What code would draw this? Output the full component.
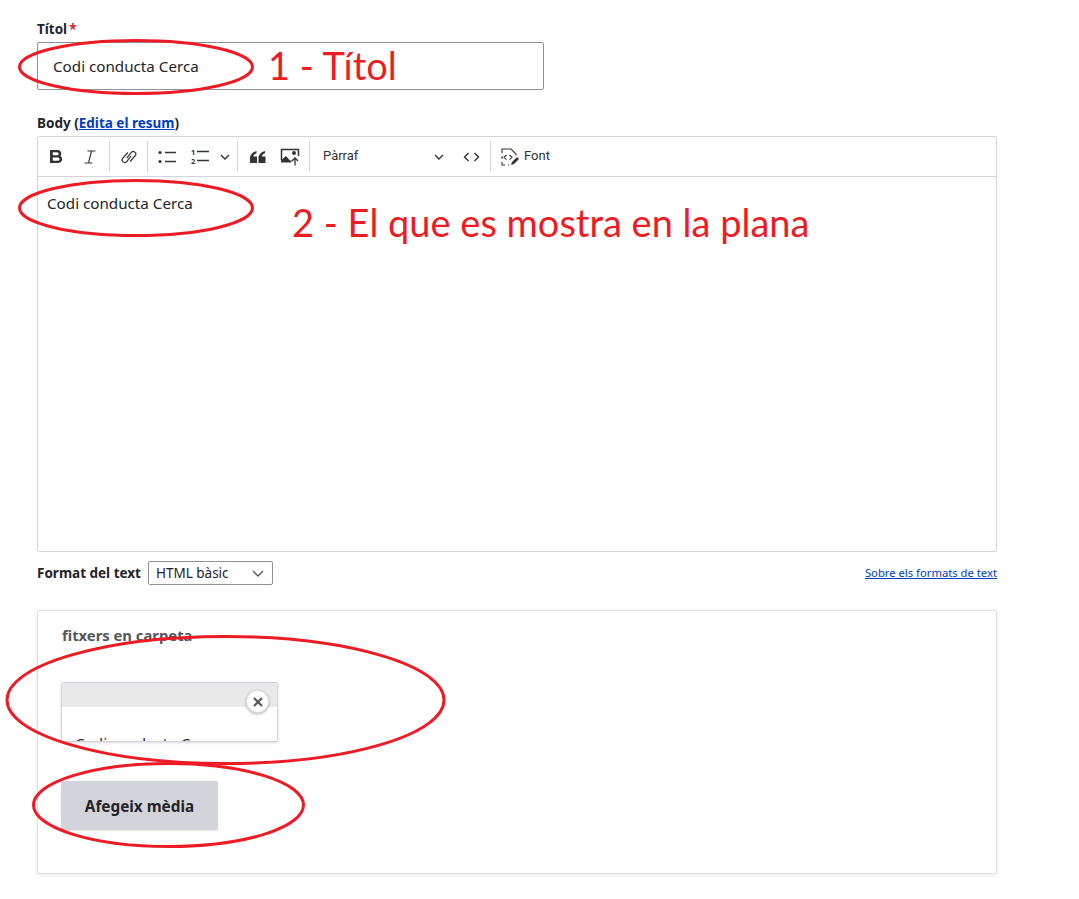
<div class="page">
	<div class="field title-field">
		<div class="label">Títol<span class="req">*</span></div>
		<div class="input">Codi conducta Cerca</div>
	</div>

	<div class="field body-field">
		<div class="label">Body (<a href="#resum" class="strong-link">Edita el resum</a>)</div>
		<div class="editor">
			<div class="toolbar">
				<span class="tool">
					<svg width="14" height="15" viewBox="0 0 14 15"><path d="M0 1h7.500a3.600 3.600 0 0 1 3 5.900A3.900 3.900 0 0 1 8.500 14H0zM2.800 3.300v3h4.400a1.500 1.500 0 0 0 0-3zM2.800 8.500v3.200h5.200a1.600 1.600 0 0 0 0-3.200z" fill="#333" fill-rule="evenodd"/></svg>
				</span>
				<span class="tool">
					<svg width="12" height="14" viewBox="0 0 12 14"><path d="M3.500 1h8M.5 13h8M7.500 1 4.500 13" fill="none" stroke="#333" stroke-width="1.100"/></svg>
				</span>
				<i class="sep first"></i>
				<span class="tool link">
					<svg width="16" height="16" viewBox="0 0 16 16" fill="none" stroke="#333" stroke-width="1.200" stroke-linecap="round"><path d="M6.200 8.600 10.500 3.200a2.600 2.600 0 0 1 4 3.200L9.500 12"/><path d="M9.800 7.400 5.500 12.800a2.600 2.600 0 0 1-4-3.200L6.500 4"/></svg>
				</span>
				<i class="sep"></i>
				<span class="tool bullets">
					<svg width="20" height="14" viewBox="0 0 20 14"><circle cx="3" cy="2.500" r="1.600" fill="#333"/><circle cx="3" cy="11.500" r="1.600" fill="#333"/><path d="M8 2.500h11M8 11.500h11" stroke="#333" stroke-width="1.300"/></svg>
				</span>
				<span class="tool num">
					<svg width="20" height="17" viewBox="0 0 20 17"><text x="1" y="6.500" class="digit">1</text><text x="1" y="16" class="digit">2</text><path d="M7 3.500h12M7 12.500h12" stroke="#333" stroke-width="1.300"/></svg>
				</span>
				<svg class="chev" width="10" height="6" viewBox="0 0 10 6"><path d="M1 1l4 4 4-4" fill="none" stroke="#333" stroke-width="1.400"/></svg>
				<i class="sep"></i>
				<span class="tool quote">
					<svg width="16" height="12" viewBox="0 0 16 12"><path d="M0 12V7.500C0 3.500 2.500 1 6.500 0v2.300C4.500 3 3.500 4 3.400 5.500H7V12zM8.500 12V7.500C8.500 3.500 11 1 15 0v2.300C13 3 12 4 11.900 5.500h3.600V12z" fill="#333"/></svg>
				</span>
				<span class="tool image">
					<svg width="20" height="18" viewBox="0 0 20 18"><path d="M1.500 12V1.500h17V8" fill="none" stroke="#333" stroke-width="1.500"/><path d="M1 14.500V12.500L6 8l4 4.500H12l-1 2z" fill="#333"/><circle cx="14" cy="5" r="2" fill="#333"/><path d="M15 17.500v-7M12 13l3-3 3 3" fill="none" stroke="#333" stroke-width="1.300"/></svg>
				</span>
				<i class="sep"></i>
				<div class="style-select">
					<span class="tool-text">Pàrraf</span>
					<svg width="10" height="6" viewBox="0 0 10 6"><path d="M1 1l4 4 4-4" fill="none" stroke="#333" stroke-width="1.400"/></svg>
				</div>
				<span class="tool code">
					<svg width="17" height="10" viewBox="0 0 17 10"><path d="M5.500 1 1.500 5l4 4M11.500 1l4 4-4 4" fill="none" stroke="#333" stroke-width="1.400"/></svg>
				</span>
				<i class="sep"></i>
				<div class="font-btn">
					<svg width="20" height="20" viewBox="0 0 20 20" fill="none" stroke="#333" stroke-width="1.100"><path d="M2 6V2h9l5 5v1.500M2 9v3M2 15v3h3M8 18h1"/><path d="M6.500 8 4 10.300l2.500 2.300M9.500 8 12 10.300l-2.500 2.300"/><path d="M11 18l1-3 5-5 2 2-5 5z" fill="#333" stroke="none"/></svg>
					<span class="tool-text">Font</span>
				</div>
			</div>
			<div class="content">Codi conducta Cerca</div>
		</div>
	</div>

	<div class="format-row">
		<div class="format-left">
			<span class="label inline">Format del text</span>
			<div class="select">
				<span>HTML bàsic</span>
				<svg width="12" height="7" viewBox="0 0 12 7"><path d="M1 1l5 5 5-5" fill="none" stroke="#55565b" stroke-width="1.300"/></svg>
			</div>
		</div>
		<a href="#formats" class="help">Sobre els formats de text</a>
	</div>

	<section class="panel">
		<h3>fitxers en carpeta</h3>
		<div class="card">
			<div class="card-head"></div>
			<button class="remove" aria-label="Remove">
				<svg width="10" height="10" viewBox="0 0 10 10"><path d="M1 1l8 8M9 1 1 9" stroke="#55565b" stroke-width="2.200"/></svg>
			</button>
			<div class="card-name">Codi conducta Cerca</div>
		</div>
		<button class="add">Afegeix mèdia</button>
	</section>

	<!-- red marks drawn on top of the screenshot -->
	<svg class="marks" width="1079" height="899" viewBox="0 0 1079 899">
		<g fill="none" stroke="#ed1c24" stroke-width="3">
			<ellipse cx="136" cy="67" rx="116.500" ry="26.500"/>
			<ellipse cx="136" cy="208" rx="116.500" ry="27.500"/>
			<ellipse cx="225.500" cy="700" rx="218.500" ry="63.500"/>
			<ellipse cx="168.500" cy="805" rx="135" ry="41.500"/>
		</g>
	</svg>
	<div class="note note-1">1 - Títol</div>
	<div class="note note-2">2 - El que es mostra en la plana</div>
</div>

<style>
	:global(body) {
		background: #fff;
	}

	.page {
		position: relative;
		width: 1079px;
		height: 899px;
		box-sizing: border-box;
		padding: 21px 0 0 37px;
		overflow: hidden;
		font-family: "Noto Sans", "Open Sans", sans-serif;
		color: #232429;
	}

	.field {
		width: 960px;
	}

	.label {
		font-size: 13.500px;
		font-weight: 700;
		line-height: 16px;
		height: 21px;
	}

	.label.inline {
		height: auto;
	}

	.req {
		color: #d72222;
		margin-left: 2px;
	}

	.input {
		box-sizing: border-box;
		width: 507px;
		height: 48px;
		border: 1px solid #919297;
		border-radius: 2px;
		padding: 0 15px;
		font-size: 15.200px;
		line-height: 47px;
	}

	.body-field {
		margin-top: 25px;
	}

	.strong-link {
		color: #003cc5;
	}

	.editor {
		box-sizing: border-box;
		height: 416px;
		border: 1px solid #d3d4d9;
		border-radius: 2px;
	}

	.toolbar {
		box-sizing: border-box;
		display: flex;
		align-items: center;
		height: 40px;
		border-bottom: 1px solid #d3d4d9;
		padding-left: 2px;
	}

	.tool {
		display: flex;
		align-items: center;
		justify-content: center;
		width: 33px;
		height: 30px;
		flex: none;
	}

	.link {
		width: 37px;
	}

	.bullets {
		width: 36px;
	}

	.num {
		width: 30px;
	}

	.digit {
		font-family: "Noto Sans", sans-serif;
		font-size: 7.500px;
		font-weight: 700;
		fill: #333;
	}

	.chev {
		flex: none;
		margin: 0 7px 0 5px;
	}

	.sep {
		flex: none;
		width: 1px;
		height: 31px;
		margin-right: 1px;
		background: #d3d4d9;
	}

	.sep.first {
		margin-left: 3px;
		margin-right: 0;
	}

	.quote {
		width: 37px;
	}

	.image {
		width: 27px;
		margin-right: 6px;
	}

	.style-select {
		display: flex;
		align-items: center;
		justify-content: space-between;
		width: 121px;
		margin-left: 12px;
		font-family: Roboto, "Liberation Sans", sans-serif;
		font-size: 13px;
		color: #333;
	}

	.tool-text {
		margin-bottom: 2px;
	}

	.code {
		width: 28px;
		margin: 0 5px 0 13px;
	}

	.font-btn {
		display: flex;
		align-items: center;
		gap: 4px;
		padding-left: 8px;
		font-family: Roboto, "Liberation Sans", sans-serif;
		font-size: 13px;
		color: #333;
	}

	.content {
		padding: 16px 9px;
		font-size: 15.200px;
		line-height: 20px;
	}

	.format-row {
		display: flex;
		align-items: center;
		justify-content: space-between;
		width: 960px;
		height: 24px;
		margin-top: 9px;
	}

	.format-left {
		display: flex;
		align-items: center;
		gap: 7px;
	}

	.select {
		box-sizing: border-box;
		display: flex;
		align-items: center;
		justify-content: space-between;
		width: 125px;
		height: 24px;
		border: 1px solid #919297;
		border-radius: 2px;
		padding: 0 8px 0 7px;
		font-size: 13.500px;
	}

	.help {
		margin-bottom: 2px;
		font-size: 11.250px;
		color: #003cc5;
	}

	.panel {
		box-sizing: border-box;
		width: 960px;
		height: 264px;
		margin-top: 25px;
		padding: 14px 24px 0;
		border: 1px solid #dedfe4;
		border-radius: 2px;
		box-shadow: 0 1px 4px rgba(0, 0, 0, 0.1);
	}

	h3 {
		margin: 0;
		font-size: 14.800px;
		font-weight: 700;
		line-height: 20px;
		color: #55565b;
	}

	.card {
		position: relative;
		box-sizing: border-box;
		width: 217px;
		height: 60px;
		margin: 37px 0 0 -1px;
		overflow: hidden;
		border: 1px solid #d3d4d9;
		border-radius: 2px;
		box-shadow: 0 1px 3px rgba(0, 0, 0, 0.15);
	}

	.card-head {
		height: 24px;
		background: #e9e9e9;
	}

	.card-name {
		padding: 26px 13px 0;
		font-size: 15.200px;
		line-height: 20px;
		white-space: nowrap;
	}

	.remove {
		position: absolute;
		top: 7px;
		right: 8px;
		display: flex;
		align-items: center;
		justify-content: center;
		width: 23px;
		height: 23px;
		padding: 0;
		border: 1px solid #e0e0e0;
		border-radius: 50%;
		background: #fff;
		box-shadow: 0 1px 3px rgba(0, 0, 0, 0.3);
	}

	.add {
		display: block;
		width: 157px;
		height: 49px;
		margin: 39px 0 0 -1px;
		padding: 0;
		border: 0;
		border-radius: 2px;
		background: #d3d4d9;
		box-shadow: 0 1px 2px rgba(0, 0, 0, 0.1);
		font-family: inherit;
		font-size: 15.300px;
		font-weight: 700;
		color: #232429;
	}

	.marks {
		position: absolute;
		top: 0;
		left: 0;
		pointer-events: none;
	}

	.note {
		position: absolute;
		font-family: Lato, "Liberation Sans", sans-serif;
		color: #ed1c24;
		white-space: nowrap;
		line-height: 1;
	}

	.note-1 {
		left: 268px;
		top: 46px;
		font-size: 38px;
	}

	.note-2 {
		left: 292px;
		top: 203px;
		font-size: 38px;
	}
</style>
